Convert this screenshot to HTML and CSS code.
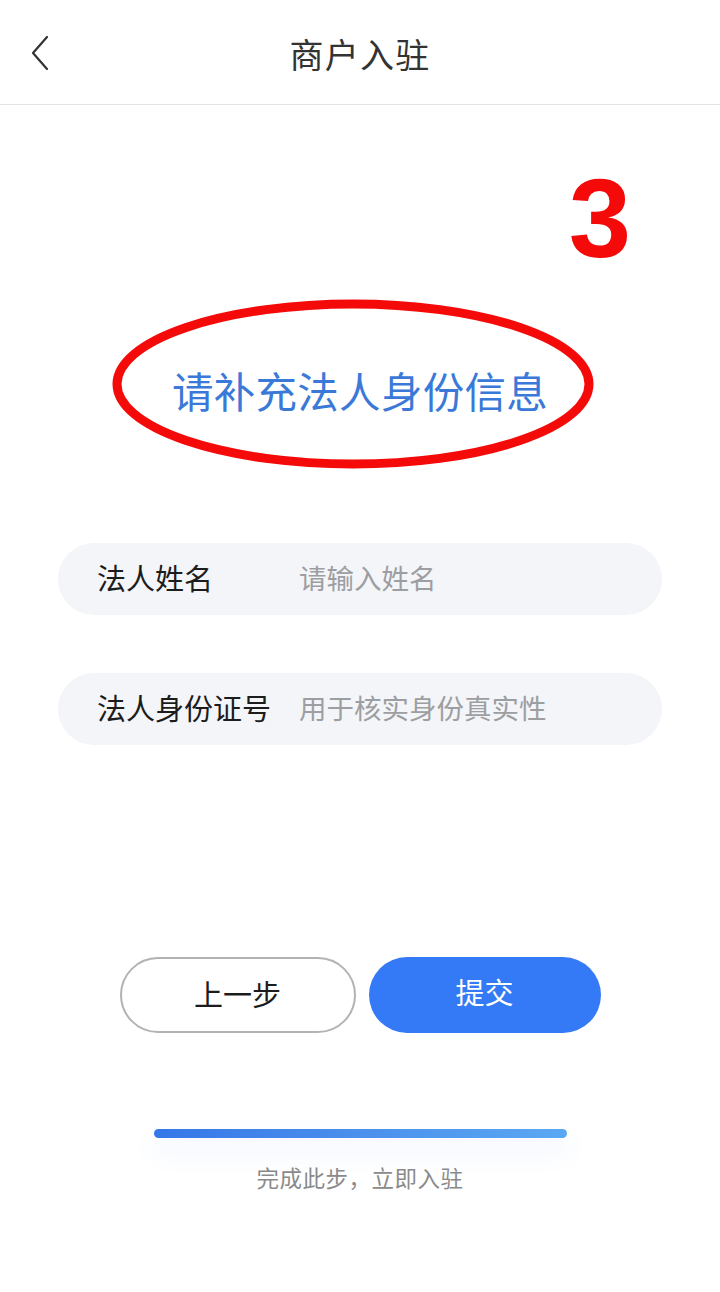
FILE: index.html
```html
<!DOCTYPE html>
<html lang="zh-CN">
<head>
<meta charset="utf-8">
<title>商户入驻</title>
<link rel="stylesheet" href="styles.css">
</head>
<body>
<div class="page">
  <header class="topbar">
    <div class="back">
      <svg width="18" height="36" viewBox="0 0 18 36" fill="none" stroke="#333" stroke-width="2.2" stroke-linecap="round" stroke-linejoin="round"><path d="M16 2 L2 18 L16 34"/></svg>
    </div>
    <h1 class="title">商户入驻</h1>
    <div></div>
  </header>

  <div class="step">3</div>

  <section class="headline">
    <svg class="ring" width="490" height="174" viewBox="0 0 490 174"><ellipse cx="245" cy="86" rx="236" ry="80" fill="none" stroke="#f50a0a" stroke-width="9"/></svg>
    <h2 class="headline-text">请补充法人身份信息</h2>
  </section>

  <form class="fields">
    <label class="field">
      <span class="field-label">法人姓名</span>
      <span class="field-input">请输入姓名</span>
    </label>
    <label class="field">
      <span class="field-label">法人身份证号</span>
      <span class="field-input">用于核实身份真实性</span>
    </label>
  </form>

  <div class="actions">
    <button class="btn btn-prev" type="button">上一步</button>
    <button class="btn btn-submit" type="button">提交</button>
  </div>

  <div class="progress">
    <div class="progress-bar"></div>
    <p class="progress-text">完成此步，立即入驻</p>
  </div>
</div>
</body>
</html>
```
FILE: styles.css
```css
* { box-sizing: border-box; }
html, body { margin: 0; padding: 0; background: #ffffff; }
body {
  font-family: "Noto Sans CJK SC", "Noto Sans", sans-serif;
  width: 720px;
  height: 1292px;
  overflow: hidden;
}
.page { display: flex; flex-direction: column; }

.topbar {
  height: 105px;
  border-bottom: 1px solid #e3e3e3;
  display: grid;
  grid-template-columns: 1fr auto 1fr;
  align-items: center;
}
.back { padding-left: 31px; display: flex; align-items: center; padding-top: 2px; }
.back svg { display: block; }
.title {
  margin: 0;
  font-size: 34px;
  font-weight: 400;
  color: #333333;
  line-height: 40px;
  letter-spacing: 1.3px;
  padding-top: 4px;
}

.step {
  margin-top: 58px;
  align-self: flex-end;
  padding-right: 91px;
  font-family: "Liberation Sans", Arial, sans-serif;
  font-weight: 700;
  font-size: 112px;
  line-height: 112px;
  color: #f50a0a;
  letter-spacing: -2px;
}

.headline {
  position: relative;
  margin-top: 23px;
  height: 174px;
  display: flex;
  align-items: center;
  justify-content: center;
  padding-top: 10px;
}
.ring { position: absolute; left: 108px; top: 0; }
.headline-text {
  position: relative;
  margin: 0;
  font-size: 41.5px;
  font-weight: 400;
  line-height: 50px;
  color: #3b79d8;
  letter-spacing: 0.3px;
}

.fields {
  margin: 71px 58px 0;
  display: flex;
  flex-direction: column;
  gap: 58px;
}
.field {
  height: 72px;
  border-radius: 36px;
  background: #f3f5f8;
  display: flex;
  align-items: center;
  padding-left: 39px;
  padding-bottom: 4px;
}
.field-label {
  width: 202px;
  font-size: 29px;
  color: #1c1c1c;
  line-height: 40px;
  flex-shrink: 0;
}
.field-input {
  font-size: 27.5px;
  color: #9d9ea2;
  line-height: 40px;
}

.actions {
  margin-top: 212px;
  display: flex;
  justify-content: center;
  gap: 13px;
}
.btn {
  height: 76px;
  border-radius: 38px;
  font-family: "Noto Sans CJK SC", "Noto Sans", sans-serif;
  font-size: 29px;
  line-height: 40px;
  padding: 0 0 5px;
  cursor: pointer;
}
.btn-prev {
  width: 236px;
  background: #ffffff;
  border: 2px solid #b3b3b3;
  color: #1c1c1c;
}
.btn-submit {
  width: 232px;
  background: #3479f5;
  border: none;
  color: #ffffff;
  padding-bottom: 9px;
}

.progress {
  margin-top: 96px;
  display: flex;
  flex-direction: column;
  align-items: center;
}
.progress-bar {
  width: 413px;
  height: 9px;
  border-radius: 5px;
  background: linear-gradient(90deg, #3577e8 0%, #4a90ec 50%, #5aa8f3 100%);
  box-shadow: 0 12px 26px rgba(70, 120, 220, 0.12);
}
.progress-text {
  margin: 23px 0 0;
  font-size: 22.5px;
  line-height: 32px;
  color: #8a8a8a;
  letter-spacing: 0.5px;
}
```
